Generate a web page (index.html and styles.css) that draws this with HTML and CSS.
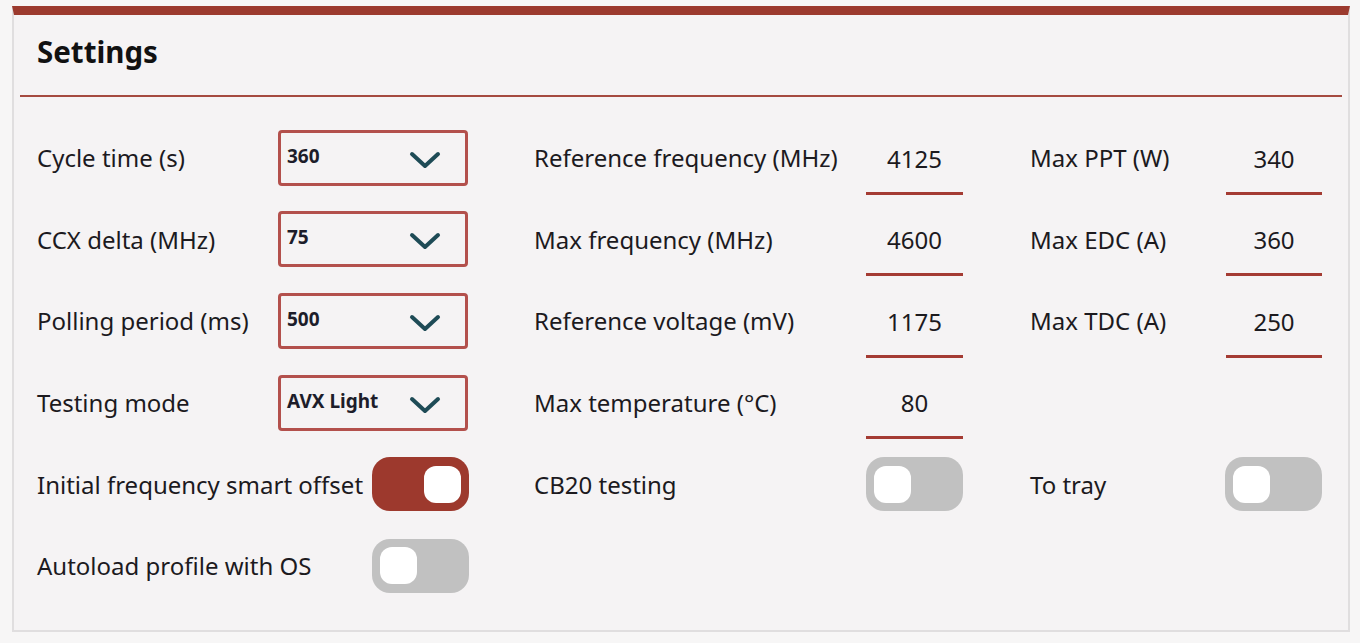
FILE: index.html
```html
<!DOCTYPE html>
<html lang="en">

<head>
    <meta charset="UTF-8">
    <meta name="viewport" content="width=device-width, initial-scale=1.0">
    <title>Settings</title>
    <link rel="stylesheet" href="styles.css">
</head>

<body>
    <div class="panel">
        <div class="panel-header">Settings</div>

        <div class="panel-body">
            <div class="group group-1">
                <div class="label">Cycle time (s)</div>
                <div class="select">
                    <span>360</span>
                    <svg class="chevron" viewBox="0 0 32 18"><polyline points="3,3 16,15 29,3" /></svg>
                </div>

                <div class="label">CCX delta (MHz)</div>
                <div class="select">
                    <span>75</span>
                    <svg class="chevron" viewBox="0 0 32 18"><polyline points="3,3 16,15 29,3" /></svg>
                </div>

                <div class="label">Polling period (ms)</div>
                <div class="select">
                    <span>500</span>
                    <svg class="chevron" viewBox="0 0 32 18"><polyline points="3,3 16,15 29,3" /></svg>
                </div>

                <div class="label">Testing mode</div>
                <div class="select">
                    <span>AVX Light</span>
                    <svg class="chevron" viewBox="0 0 32 18"><polyline points="3,3 16,15 29,3" /></svg>
                </div>

                <div class="label">Initial frequency smart offset</div>
                <div class="toggle on"><span class="knob"></span></div>

                <div class="label">Autoload profile with OS</div>
                <div class="toggle"><span class="knob"></span></div>
            </div>

            <div class="group group-2">
                <div class="label">Reference frequency (MHz)</div>
                <div class="value">4125</div>

                <div class="label">Max frequency (MHz)</div>
                <div class="value">4600</div>

                <div class="label">Reference voltage (mV)</div>
                <div class="value">1175</div>

                <div class="label">Max temperature (°C)</div>
                <div class="value">80</div>

                <div class="label">CB20 testing</div>
                <div class="toggle"><span class="knob"></span></div>
            </div>

            <div class="group group-3">
                <div class="label">Max PPT (W)</div>
                <div class="value">340</div>

                <div class="label">Max EDC (A)</div>
                <div class="value">360</div>

                <div class="label">Max TDC (A)</div>
                <div class="value">250</div>

                <div class="label"></div>
                <div></div>

                <div class="label">To tray</div>
                <div class="toggle"><span class="knob"></span></div>
            </div>
        </div>
    </div>
</body>

</html>
```

FILE: styles.css
```css
body {
    font-family: "Noto Sans", "Open Sans", Arial, sans-serif;
    margin: 0;
    padding: 0;
    background-color: #f7f6f6;
    color: #1c1a1e;
}

.panel {
    margin: 6px 10px 0 12px;
    height: 626px;
    box-sizing: border-box;
    background-color: #f5f3f4;
    border: 2px solid #e0dedf;
    border-top: 9px solid #9c3a2e;
}

.panel-header {
    margin: 0 6px;
    height: 73px;
    padding: 0 0 7px 17px;
    display: flex;
    align-items: center;
    font-size: 29.5px;
    font-weight: bold;
    color: #111;
    border-bottom: 2px solid #a54a40;
}

.panel-body {
    display: flex;
    gap: 65px;
    padding: 20px 0 0 23px;
}

.group {
    display: grid;
    grid-auto-rows: 81.6px;
    align-items: center;
}

.group-1 {
    grid-template-columns: 241px 191px;
}

.group-2 {
    grid-template-columns: 332px 97px;
}

.group-3 {
    grid-template-columns: 196px 96px;
    margin-left: 2px;
}

.label {
    font-size: 24px;
    white-space: nowrap;
}

/* dropdowns */
.select {
    height: 56px;
    width: 190px;
    box-sizing: border-box;
    border: 3px solid #b3504c;
    border-radius: 4px;
    display: flex;
    align-items: center;
    justify-content: space-between;
    padding: 0 24px 0 6px;
    font-size: 19px;
    font-weight: bold;
    color: #1d1d2a;
}

.select span {
    margin-top: -4px;
}

.chevron {
    width: 32px;
    height: 18px;
    margin-top: 4px;
}

.chevron polyline {
    fill: none;
    stroke: #1e4b56;
    stroke-width: 4;
    stroke-linecap: round;
    stroke-linejoin: round;
}

/* numeric fields */
.value {
    height: 70px;
    box-sizing: border-box;
    border-bottom: 3px solid #a43b33;
    display: flex;
    align-items: center;
    justify-content: center;
    font-size: 24px;
    align-self: end;
    margin-bottom: 4px;
}

/* switches */
.toggle {
    justify-self: end;
    width: 97px;
    height: 54px;
    border-radius: 18px;
    background-color: #c1c1c1;
    display: flex;
    align-items: center;
    padding: 0 8px;
    box-sizing: border-box;
}

.toggle.on {
    background-color: #9d392d;
    justify-content: flex-end;
}

.knob {
    width: 37px;
    height: 37px;
    border-radius: 12px;
    background-color: #fff;
}
```
